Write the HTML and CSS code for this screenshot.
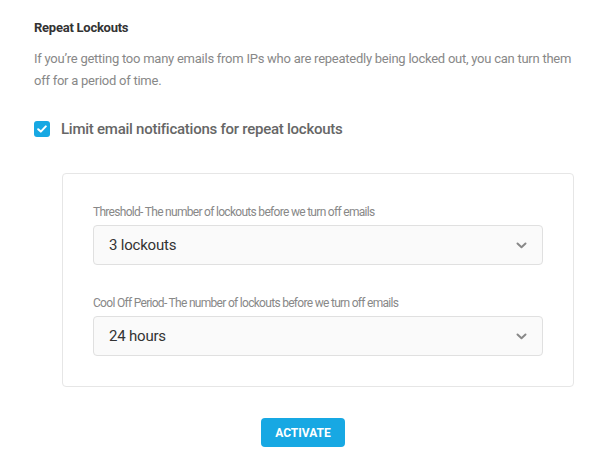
FILE: index.html
```html
<!DOCTYPE html>
<html>
<head>
<meta charset="utf-8">
<link rel="stylesheet" href="styles.css">
</head>
<body>
<div class="page">
  <h3 class="title">Repeat Lockouts</h3>
  <p class="desc">If you’re getting too many emails from IPs who are repeatedly being locked out, you can turn them off for a period of time.</p>
  <label class="check-row">
    <span class="checkbox">
      <svg width="10" height="8" viewBox="0 0 10 8"><path d="M1.2 4.2 L3.8 6.6 L8.8 1.4" fill="none" stroke="#fff" stroke-width="2" stroke-linecap="round" stroke-linejoin="round"/></svg>
    </span>
    <span class="check-label">Limit email notifications for repeat lockouts</span>
  </label>
  <div class="box">
    <div class="field">
      <div class="field-label">Threshold- The number of lockouts before we turn off emails</div>
      <div class="select"><span>3 lockouts</span>
        <svg class="chev" width="11" height="7" viewBox="0 0 11 7"><path d="M1.5 1.5 L5.5 5.2 L9.5 1.5" fill="none" stroke="#888" stroke-width="2" stroke-linecap="round" stroke-linejoin="round"/></svg>
      </div>
    </div>
    <div class="field">
      <div class="field-label">Cool Off Period- The number of lockouts before we turn off emails</div>
      <div class="select"><span>24 hours</span>
        <svg class="chev" width="11" height="7" viewBox="0 0 11 7"><path d="M1.5 1.5 L5.5 5.2 L9.5 1.5" fill="none" stroke="#888" stroke-width="2" stroke-linecap="round" stroke-linejoin="round"/></svg>
      </div>
    </div>
  </div>
  <div class="actions"><button class="btn">ACTIVATE</button></div>
</div>
</body>
</html>
```
FILE: styles.css
```css
html, body { margin: 0; padding: 0; background: #fff; }
body { font-family: Roboto, "Open Sans", sans-serif; }
.page { padding: 18px 38px 0 34px; }
.title { margin: 0; font-size: 13px; line-height: 20px; font-weight: 700; color: #333; letter-spacing: -0.25px; }
.desc { margin: 10px 0 0; font-size: 13px; line-height: 22px; color: #888; letter-spacing: -0.25px; }
.check-row { display: flex; align-items: center; gap: 11px; margin-top: 25px; height: 24px; }
.checkbox { width: 16px; height: 16px; border-radius: 3px; background: #17a8e3; display: flex; align-items: center; justify-content: center; }
.check-label { font-size: 15px; color: #666; font-weight: 500; letter-spacing: -0.25px; }
.box { margin: 32px 0 0 28px; width: 450px; border: 1px solid #e6e6e6; border-radius: 4px; padding: 30px; display: flex; flex-direction: column; gap: 30px; }
.field-label { font-size: 12px; line-height: 16px; color: #888; letter-spacing: -0.7px; }
.select { margin-top: 5px; height: 38px; border: 1px solid #e0e0e0; border-radius: 4px; background: #fafafa; display: flex; align-items: center; justify-content: space-between; padding: 0 15px 0 15px; font-size: 15px; color: #333; letter-spacing: -0.2px; }
.actions { display: flex; justify-content: center; margin-top: 31px; }
.btn { width: 84px; height: 29px; border: 0; border-radius: 4px; background: #17a8e3; color: #fff; font-family: Roboto, sans-serif; font-weight: 700; font-size: 12px; padding: 0; }
```
